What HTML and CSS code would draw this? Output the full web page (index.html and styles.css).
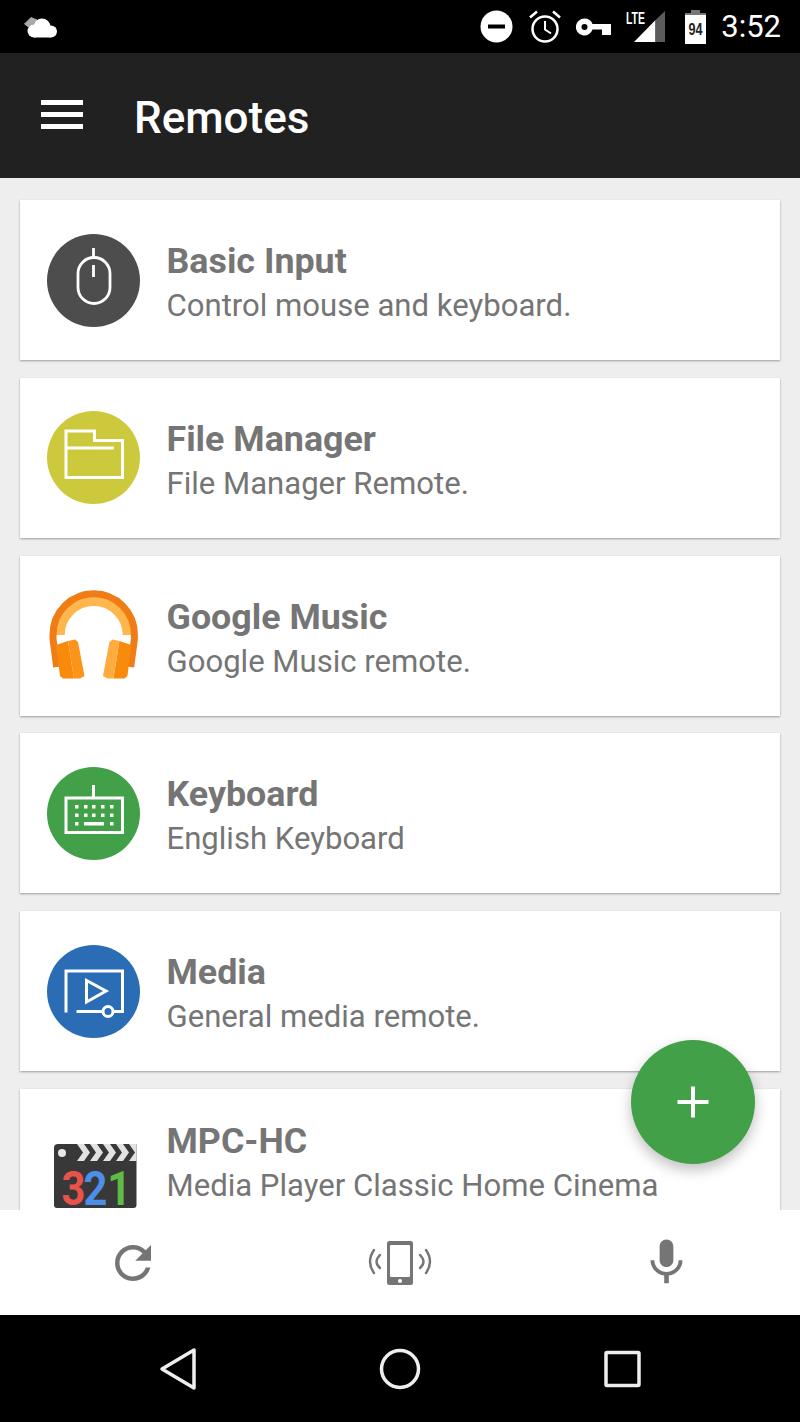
FILE: index.html
```html
<!DOCTYPE html>
<html>
  <head>
    <title>Remotes</title>
    <link rel="stylesheet" href="styles.css">
  </head>
  <body>
    <div class="screen">

      <div class="status-bar">
        <svg class="cloud" width="35" height="23" viewBox="0 0 35 23">
          <path d="M1.500 8 L8 1.500 L14 4 L7 12 Z" fill="#aaa" stroke="#aaa" stroke-linejoin="round"/>
          <g fill="#fff">
            <circle cx="19" cy="11" r="8.500"/>
            <circle cx="11" cy="15" r="6.500"/>
            <circle cx="28" cy="15.500" r="6"/>
            <rect x="11" y="14" width="17" height="7.500"/>
          </g>
        </svg>
        <div class="status-icons">
          <svg width="33" height="33" viewBox="0 0 33 33">
            <circle cx="16.500" cy="16.500" r="16" fill="#fff"/>
            <rect x="8" y="14.500" width="17" height="4" fill="#000"/>
          </svg>
          <svg class="ml-16" width="32" height="34" viewBox="0 0 32 34">
            <circle cx="16" cy="19" r="12.500" fill="none" stroke="#fff" stroke-width="2.500"/>
            <path d="M16 11 V19.500 L22 23.500" fill="none" stroke="#fff" stroke-width="2"/>
            <path d="M1 7.500 L8 1.500 M31 7.500 L24 1.500" stroke="#fff" stroke-width="2.500"/>
          </svg>
          <svg class="ml-15" width="35" height="18" viewBox="0 0 35 18">
            <path d="M8.500 0.500 A8.500 8.500 0 0 1 16.500 6 H35 V17 H26 V11.500 H16.500 A8.500 8.500 0 1 1 8.500 0.500 Z M8.500 6 A3 3 0 1 0 8.500 12 A3 3 0 1 0 8.500 6 Z" fill="#fff" fill-rule="evenodd"/>
          </svg>
          <svg class="ml-15" width="40" height="34" viewBox="0 0 40 34">
            <text class="lte" x="0" y="14" textLength="19" lengthAdjust="spacingAndGlyphs">LTE</text>
            <path d="M8 32 L29.500 10 V32 Z" fill="#fff"/>
            <path d="M29.500 10 L39 1 V32 H29.500 Z" fill="#5c5c5c"/>
          </svg>
          <svg class="ml-19" width="21" height="34" viewBox="0 0 21 34">
            <path d="M6 0 H15 V3 H21 V34 H0 V3 H6 Z" fill="#fff"/>
            <path d="M6 0 H15 V3 H21 V5 H0 V3 H6 Z" fill="#777"/>
            <text class="battery-level" x="10.500" y="25" text-anchor="middle" textLength="14" lengthAdjust="spacingAndGlyphs">94</text>
          </svg>
          <span class="clock">3:52</span>
        </div>
      </div>

      <div class="app-bar">
        <div class="menu-icon">
          <span></span>
          <span></span>
          <span></span>
        </div>
        <h1 class="app-title">Remotes</h1>
      </div>

      <div class="remote-list">

        <div class="card">
          <svg class="card-icon" width="93" height="93" viewBox="0 0 93 93">
            <circle cx="46.500" cy="46.500" r="46.500" fill="#4c4d4c"/>
            <rect x="31" y="23.500" width="32" height="46" rx="16" fill="none" stroke="#fff" stroke-width="2.800"/>
            <path d="M46.500 14 V23.500 M46.500 31 V43" stroke="#fff" stroke-width="2.800"/>
          </svg>
          <div class="card-text">
            <div class="card-title">Basic Input</div>
            <div class="card-sub">Control mouse and keyboard.</div>
          </div>
        </div>

        <div class="card">
          <svg class="card-icon" width="93" height="93" viewBox="0 0 93 93">
            <circle cx="46.500" cy="46.500" r="46.500" fill="#cdc93d"/>
            <path d="M19 66.500 V20 H47.500 V29.500 H75.500 V66.500 Z" fill="none" stroke="#fff" stroke-width="3"/>
            <path d="M20 37 H67" stroke="#fff" stroke-width="3"/>
          </svg>
          <div class="card-text">
            <div class="card-title">File Manager</div>
            <div class="card-sub">File Manager Remote.</div>
          </div>
        </div>

        <div class="card">
          <svg class="card-icon" width="93" height="93" viewBox="0 0 93 93">
            <path d="M13.200 46 A33.500 33.500 0 0 1 80.200 46" fill="none" stroke="#ffb74d" stroke-width="9"/>
            <path d="M9.700 78 L6 50 V45.500 A40.700 40.700 0 0 1 87.400 45.500 V50 L83.700 78" fill="none" stroke="#ef7c14" stroke-width="7"/>
            <path d="M9 56 L21 52 L27 89.500 H16 L13 87 Z" fill="#f88a0c"/>
            <path d="M21 52 L28 50.500 L31 53 L37.500 87 L33 89.500 H27 Z" fill="#fb9418"/>
            <path d="M84.400 56 L72.400 52 L66.400 89.500 H77.400 L80.400 87 Z" fill="#f88a0c"/>
            <path d="M72.400 52 L65.400 50.500 L62.400 53 L55.900 87 L60.400 89.500 H66.400 Z" fill="#ffac3f"/>
          </svg>
          <div class="card-text">
            <div class="card-title">Google Music</div>
            <div class="card-sub">Google Music remote.</div>
          </div>
        </div>

        <div class="card">
          <svg class="card-icon" width="93" height="93" viewBox="0 0 93 93">
            <circle cx="46.500" cy="46.500" r="46.500" fill="#41a048"/>
            <path d="M46.500 18 V31 M19 31 H75.500 V65.500 H19 Z" fill="none" stroke="#fff" stroke-width="3"/>
            <g fill="#fff">
              <rect x="28" y="38" width="3.500" height="3.500"/>
              <rect x="37" y="38" width="3.500" height="3.500"/>
              <rect x="45" y="38" width="3.500" height="3.500"/>
              <rect x="54" y="38" width="3.500" height="3.500"/>
              <rect x="63" y="38" width="3.500" height="3.500"/>
              <rect x="28" y="46.500" width="3.500" height="3.500"/>
              <rect x="37" y="46.500" width="3.500" height="3.500"/>
              <rect x="45" y="46.500" width="3.500" height="3.500"/>
              <rect x="54" y="46.500" width="3.500" height="3.500"/>
              <rect x="63" y="46.500" width="3.500" height="3.500"/>
              <rect x="28" y="55" width="3.500" height="3.500"/>
              <rect x="37" y="55" width="20" height="3.500"/>
              <rect x="63" y="55" width="3.500" height="3.500"/>
            </g>
          </svg>
          <div class="card-text">
            <div class="card-title">Keyboard</div>
            <div class="card-sub">English Keyboard</div>
          </div>
        </div>

        <div class="card">
          <svg class="card-icon" width="93" height="93" viewBox="0 0 93 93">
            <circle cx="46.500" cy="46.500" r="46.500" fill="#2a6db5"/>
            <path d="M19 67.500 V26 H75.500 V66.500 H66" fill="none" stroke="#fff" stroke-width="3"/>
            <path d="M29.500 66.500 H56" stroke="#fff" stroke-width="3"/>
            <circle cx="61" cy="66.500" r="5" fill="none" stroke="#fff" stroke-width="3"/>
            <path d="M39.500 35.500 V57 L59 46 Z" fill="none" stroke="#fff" stroke-width="3"/>
          </svg>
          <div class="card-text">
            <div class="card-title">Media</div>
            <div class="card-sub">General media remote.</div>
          </div>
        </div>

        <div class="card card-tall">
          <svg class="card-icon clapper" width="93" height="65" viewBox="0 0 93 65">
            <path d="M7 4 A4 4 0 0 1 11 0 H89.500 V61 A3 3 0 0 1 86.500 64 H10 A3 3 0 0 1 7 61 Z" fill="#383838"/>
            <g fill="#e2e2e2">
              <path d="M30 0 H37 L43 8.500 L37 17 H30 L36 8.500 Z"/>
              <path d="M43 0 H50 L56 8.500 L50 17 H43 L49 8.500 Z"/>
              <path d="M56 0 H63 L69 8.500 L63 17 H56 L62 8.500 Z"/>
              <path d="M69 0 H76 L82 8.500 L76 17 H69 L75 8.500 Z"/>
              <path d="M82 0 H89.500 V17 H82 L88 8.500 Z"/>
            </g>
            <circle cx="15" cy="9" r="4" fill="#e8e8e8"/>
            <g transform="scale(.85 1)">
              <text class="digit-red" x="17" y="61">3</text>
              <text class="digit-blue" x="43" y="61">2</text>
              <text class="digit-green" x="71" y="61">1</text>
            </g>
          </svg>
          <div class="card-text">
            <div class="card-title">MPC-HC</div>
            <div class="card-sub">Media Player Classic Home Cinema</div>
          </div>
        </div>

      </div>

      <div class="fab">
        <svg width="32" height="32" viewBox="0 0 32 32">
          <path d="M16 0.500 V31.500 M0.500 16 H31.500" stroke="#fff" stroke-width="4"/>
        </svg>
      </div>

      <div class="bottom-bar">
        <div class="bottom-item">
          <svg width="54" height="54" viewBox="0 0 24 24">
            <path d="M17.650 6.350A7.958 7.958 0 0 0 12 4c-4.420 0-7.990 3.580-7.990 8s3.570 8 7.990 8c3.730 0 6.840-2.550 7.730-6h-2.080A5.990 5.990 0 0 1 12 18c-3.310 0-6-2.690-6-6s2.690-6 6-6c1.660 0 3.140.690 4.220 1.780L13 11h7V4l-2.350 2.350z" fill="#757575"/>
          </svg>
        </div>
        <div class="bottom-item">
          <svg width="66" height="46" viewBox="0 0 66 46">
            <rect x="20" y="1" width="26" height="44" rx="2.500" fill="#757575"/>
            <rect x="23" y="5" width="20" height="32" rx="1" fill="#fff"/>
            <circle cx="33" cy="41" r="2" fill="#fff"/>
            <g fill="none" stroke="#757575" stroke-width="2.400" stroke-linecap="round">
              <path d="M13 15 Q6 22 13 28"/>
              <path d="M7 10 Q-1 21.500 7 33"/>
              <path d="M53 15 Q60 22 53 28"/>
              <path d="M59 10 Q67 21.500 59 33"/>
            </g>
          </svg>
        </div>
        <div class="bottom-item">
          <svg width="55" height="55" viewBox="0 0 24 24">
            <path d="M12 14c1.660 0 2.990-1.340 2.990-3L15 5c0-1.660-1.340-3-3-3S9 3.340 9 5v6c0 1.660 1.340 3 3 3zm5.300-3c0 3-2.540 5.100-5.300 5.100S6.700 14 6.700 11H5c0 3.410 2.720 6.230 6 6.720V21h2v-3.280c3.280-.480 6-3.300 6-6.720h-1.700z" fill="#757575"/>
          </svg>
        </div>
      </div>

      <div class="nav-bar">
        <svg width="40" height="46" viewBox="0 0 40 46">
          <path d="M36 4 V42 L4 23 Z" fill="none" stroke="#eee" stroke-width="3.500" stroke-linejoin="round"/>
        </svg>
        <svg width="44" height="44" viewBox="0 0 44 44">
          <circle cx="22" cy="22" r="18.500" fill="none" stroke="#eee" stroke-width="3.500"/>
        </svg>
        <svg width="40" height="40" viewBox="0 0 40 40">
          <rect x="4" y="3.500" width="33" height="33" rx="1" fill="none" stroke="#eee" stroke-width="3.500"/>
        </svg>
      </div>

    </div>
  </body>
</html>
```

FILE: styles.css
```css
* {
    box-sizing: border-box;
}

body {
    margin: 0;
    font-family: Roboto, sans-serif;
}

.screen {
    position: relative;
    width: 800px;
    height: 1422px;
    overflow: hidden;
    background: #eee;
}

/* status bar */

.status-bar {
    display: flex;
    align-items: center;
    justify-content: space-between;
    height: 53px;
    padding: 0 19px 0 23px;
    background: #000;
}

.cloud {
    margin-top: 2px;
}

.status-icons {
    display: flex;
    align-items: center;
}

.ml-15 {
    margin-left: 15px;
}

.ml-16 {
    margin-left: 16px;
}

.ml-19 {
    margin-left: 19px;
}

.lte {
    font: bold 16px "Liberation Sans", sans-serif;
    fill: #fff;
}

.battery-level {
    font: bold 17px "Liberation Sans", sans-serif;
    fill: #222;
}

.clock {
    margin-left: 15px;
    font-size: 31px;
    color: #fff;
}

/* app bar */

.app-bar {
    display: flex;
    align-items: center;
    height: 125px;
    padding-left: 41px;
    background: #212121;
}

.menu-icon {
    display: flex;
    flex-direction: column;
    gap: 7px;
    width: 42px;
    margin-top: -2px;
}

.menu-icon span {
    height: 5px;
    background: #fff;
}

.app-title {
    margin: 5px 0 0 51px;
    font-size: 44px;
    font-weight: 500;
    color: #fff;
}

/* cards */

.remote-list {
    height: 1032px;
    padding: 22px 20px 0;
}

.card {
    display: flex;
    align-items: center;
    height: 160px;
    margin-bottom: 17.750px;
    padding-left: 26.500px;
    background: #fff;
    box-shadow: 0 1px 2px rgba(0, 0, 0, .35);
}

/* runs on under the bottom bar */
.card-tall {
    height: 178px;
}

.card-tall .card-text {
    margin-top: -29px;
}

.clapper {
    margin-top: -3px;
    overflow: visible;
}

.card-icon {
    flex: none;
}

.card-text {
    margin-top: 7px;
    margin-left: 27px;
    color: #757575;
}

.card-title {
    font-size: 35.800px;
    font-weight: 700;
    line-height: 45px;
}

.card-sub {
    font-size: 31.100px;
    line-height: 44px;
}

.digit-red,
.digit-blue,
.digit-green {
    font: bold 49px Roboto, sans-serif;
}

.digit-red {
    fill: #e8524a;
}

.digit-blue {
    fill: #4d8fe8;
}

.digit-green {
    fill: #5dbb46;
}

/* floating button */

.fab {
    position: absolute;
    top: 1040px;
    left: 631px;
    display: flex;
    align-items: center;
    justify-content: center;
    width: 124px;
    height: 124px;
    border-radius: 50%;
    background: #41a048;
    box-shadow: 0 6px 14px rgba(0, 0, 0, .25);
}

/* bottom bars */

.bottom-bar {
    position: relative;
    display: flex;
    height: 105px;
    background: #fff;
}

.bottom-item {
    display: flex;
    flex: 1;
    align-items: center;
    justify-content: center;
}

.nav-bar {
    display: grid;
    grid-template-columns: repeat(3, 222px);
    align-items: center;
    justify-items: center;
    height: 107px;
    padding-left: 67px;
    background: #000;
}
```
